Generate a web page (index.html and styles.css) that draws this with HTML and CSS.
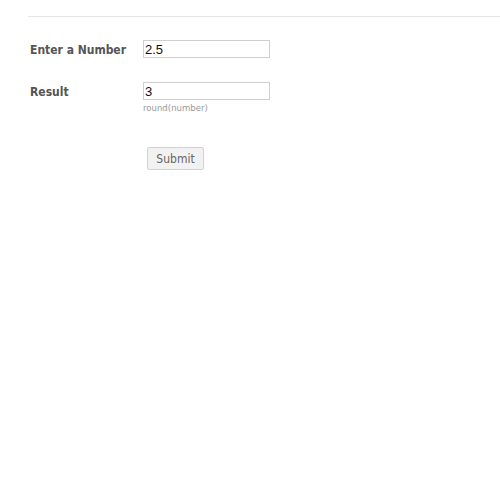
FILE: index.html
```html
<html lang="en">
  <head>
    <title>round</title>
    <meta charset="utf-8">
    <link rel="stylesheet" href="styles.css">
  </head>
  <body>
    <form class="calc">
      <div class="row">
        <label class="lbl" for="number">Enter a Number</label>
        <div class="field">
          <input class="box" id="number" type="text" value="2.5">
        </div>
      </div>
      <div class="row">
        <label class="lbl" for="result">Result</label>
        <div class="field">
          <input class="box" id="result" type="text" value="3">
          <div class="hint">round(number)</div>
        </div>
      </div>
      <div class="actions">
        <button class="submit" type="button">Submit</button>
      </div>
    </form>
  </body>
</html>
```

FILE: styles.css
```css
body {
	margin: 0;
	background: #fff;
	font-family: "DejaVu Sans Condensed", "DejaVu Sans", Verdana, sans-serif;
}
.calc {
	margin: 16px 0 0 28px;
	border-top: 1px solid #e6e6e6;
	padding-top: 23px;
}
.row {
	display: flex;
	padding-left: 2px;
	min-height: 42px;
}
.lbl {
	width: 113px;
	font-size: 12px;
	font-weight: bold;
	color: #555;
	padding-top: 3px;
}
.box {
	display: block;
	width: 127px;
	height: 18px;
	box-sizing: border-box;
	border: 1px solid #cfcfcf;
	padding: 0 1px;
	font-family: "Liberation Sans", Arial, sans-serif;
	font-size: 13px;
	color: #111;
	outline: none;
}
.hint {
	font-size: 9.5px;
	color: #999;
	margin-top: 2px;
}
.actions {
	padding: 23px 0 0 119px;
}
.submit {
	width: 57px;
	height: 23px;
	border: 1px solid #d2d2d2;
	border-radius: 2px;
	background: #f2f2f2;
	color: #666;
	font-family: "DejaVu Sans Condensed", "DejaVu Sans", Verdana, sans-serif;
	font-size: 12px;
	padding: 0;
}
```
